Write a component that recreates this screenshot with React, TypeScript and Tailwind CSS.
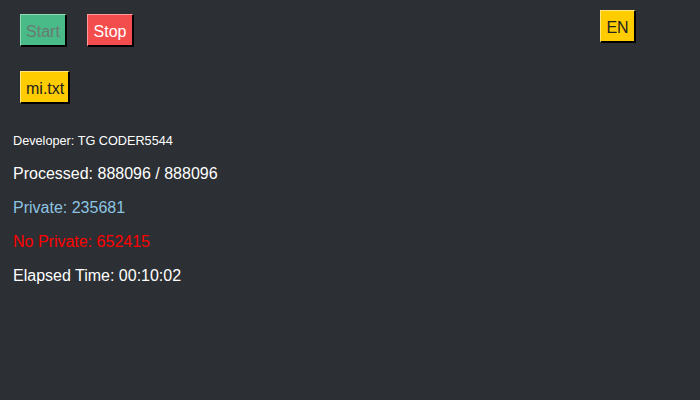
import { useState } from 'react';

const btn =
  'h-[33px] px-[5px] pt-[3px] text-[16px] border-t border-l border-r-2 border-b-2 border-b-black border-r-black leading-none';

export default function App() {
  const [lang] = useState('EN');

  return (
    <div className="w-[700px] h-[400px] bg-[#2c2f33] font-['Liberation_Sans',Arial,sans-serif] text-white relative">
      <button className={`absolute top-[10px] left-[600px] w-[36px] h-[32px] ${btn} bg-[#ffcc00] text-[#222] border-t-[#ffe680] border-l-[#ffe680]`}>
        {lang}
      </button>

      <div className="pl-[20px] pt-[14px] flex gap-[20px]">
        <button
          disabled
          className={`w-[47px] ${btn} bg-[#48bb88] text-[#6b7a72] border-t-[#8fdcb4] border-l-[#8fdcb4]`}
        >
          Start
        </button>
        <button className={`w-[47px] ${btn} bg-[#f34d4d] text-white border-t-[#ff9a9a] border-l-[#ff9a9a]`}>
          Stop
        </button>
      </div>

      <div className="pl-[20px] pt-[24px]">
        <button className={`w-[50px] ${btn} bg-[#ffcc00] text-[#222] border-t-[#ffe680] border-l-[#ffe680]`}>
          mi.txt
        </button>
      </div>

      <div className="pl-[13px] pt-[30px]">
        <p className="text-[12.7px] leading-[14px]">Developer: TG CODER5544</p>
        <p className="text-[16px] leading-[18px] mt-[17px]">Processed: 888096 / 888096</p>
        <p className="text-[16px] leading-[18px] mt-[16px] text-[#8cc4e2]">Private: 235681</p>
        <p className="text-[16px] leading-[18px] mt-[16px] text-[#ff0000]">No Private: 652415</p>
        <p className="text-[16px] leading-[18px] mt-[16px]">Elapsed Time: 00:10:02</p>
      </div>
    </div>
  );
}
